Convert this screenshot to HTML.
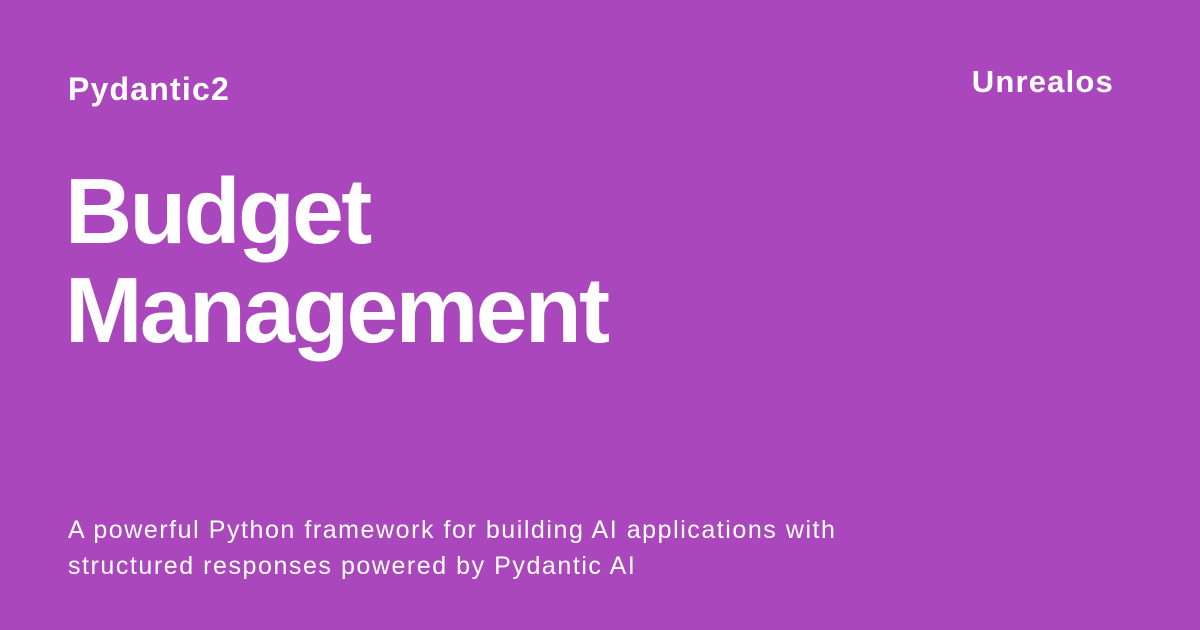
<!DOCTYPE html>
<html><head><meta charset="utf-8"><style>
html,body{margin:0;padding:0;}
body{width:1200px;height:630px;background:#AB47BC;position:relative;overflow:hidden;font-family:"Liberation Sans",Arial,sans-serif;color:#fff;}
.brand{position:absolute;left:68px;top:70px;font-size:32px;font-weight:bold;line-height:38px;letter-spacing:1.2px;}
.logo{position:absolute;right:86px;top:63px;font-size:31px;font-weight:bold;line-height:38px;letter-spacing:1.2px;}
.title{position:absolute;left:65px;top:162px;font-size:93px;font-weight:bold;line-height:99px;letter-spacing:-2.6px;}
.desc{position:absolute;left:68px;top:512px;font-size:25px;line-height:36px;letter-spacing:1.55px;}
</style></head><body>
<div class="brand">Pydantic2</div>
<div class="logo">Unrealos</div>
<div class="title">Budget<br>Management</div>
<div class="desc">A powerful Python framework for building AI applications with<br>structured responses powered by Pydantic AI</div>
</body></html>
